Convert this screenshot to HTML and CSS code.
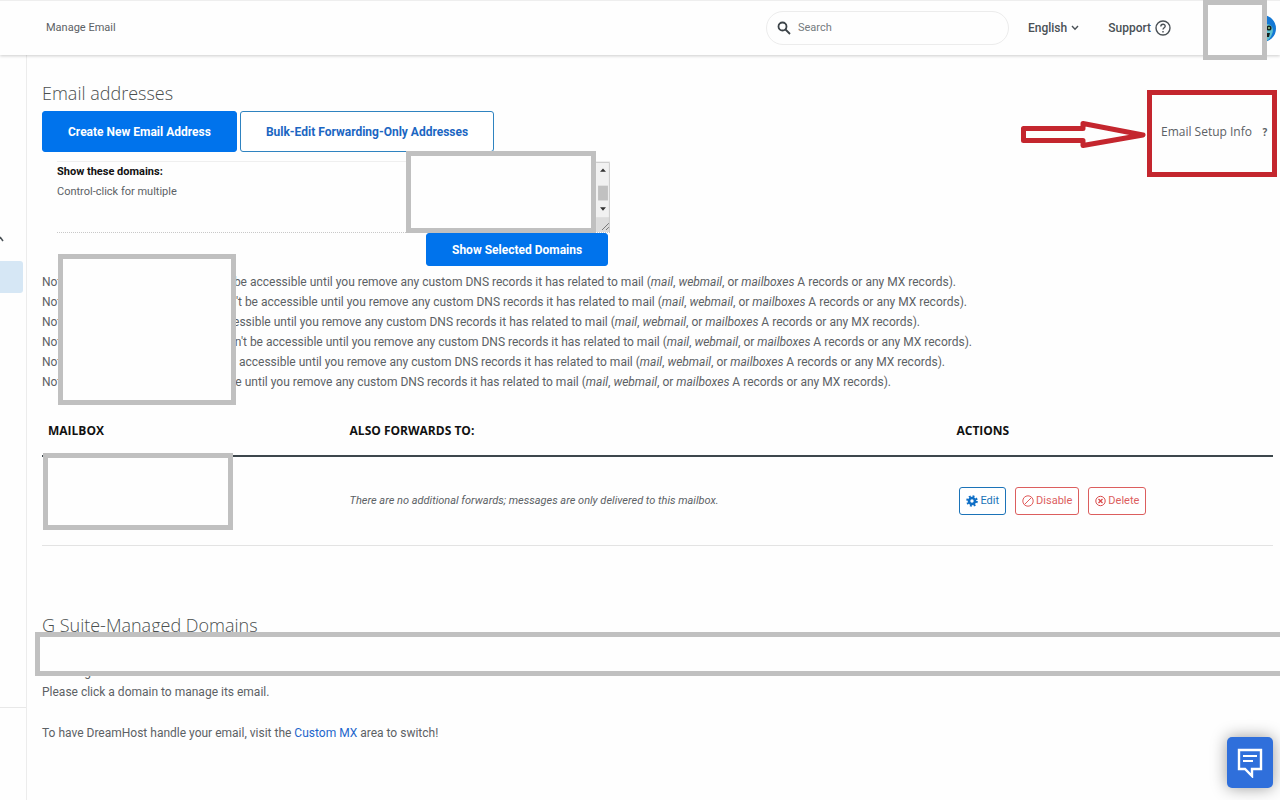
FILE: index.html
```html
<!DOCTYPE html>
<html lang="en">
<head>
    <meta charset="UTF-8">
    <meta name="viewport" content="width=device-width, initial-scale=1.0">
    <title>Manage Email</title>
    <link rel="stylesheet" href="styles.css">
</head>
<body>
    <header class="topbar">
        <span class="page-name">Manage Email</span>
        <label class="search">
            <svg width="14" height="14" viewBox="0 0 14 14" fill="none" stroke="#3c4348" stroke-width="1.800"><circle cx="5.500" cy="5.500" r="4"/><path d="M8.500 8.500L13 13"/></svg>
            <input type="search" placeholder="Search" aria-label="Search">
        </label>
        <a class="top-link lang" href="#">English
            <svg width="8" height="6" viewBox="0 0 8 6" fill="none" stroke="#4a5156" stroke-width="1.400"><path d="M1 1l3 3.200L7 1"/></svg>
        </a>
        <a class="top-link support" href="#">Support
            <svg width="16" height="16" viewBox="0 0 16 16" fill="none" stroke="#4a5156" stroke-width="1.400"><circle cx="8" cy="8" r="7"/><path d="M5.800 6.400c0-3 4.500-2.800 4.400-.2C10.200 7.800 8 7.800 8 9.600M8 10.900v1.500"/></svg>
        </a>
        <div class="account">
            <svg class="avatar" width="27" height="27" viewBox="0 0 27 27"><circle cx="13.500" cy="13.500" r="13.500" fill="#1478d4"/><path d="M7 25c-3-8 2-16 10-16 7 0 8 6 6 10-1 4-5 8-9 8z" fill="#5cc0cf"/><circle cx="20" cy="13" r="2.600" fill="#15201c"/><circle cx="20" cy="13" r="1" fill="#9bd08a"/><path d="M17 18h4l-1 4h-2z" fill="#15201c"/></svg>
            <div class="cover cover-account"></div>
        </div>
    </header>

    <div class="layout">
        <nav class="sidebar">
            <svg class="caret" width="4" height="8" viewBox="0 0 4 8" fill="none" stroke="#4a5156" stroke-width="1.500"><path d="M0 2l3 4"/></svg>
            <a class="active" href="#" aria-label="Manage Email"></a>
            <div class="side-line"></div>
        </nav>

        <main>
            <h1>Email addresses</h1>
            <div class="toolbar">
                <button class="btn primary">Create New Email Address</button>
                <button class="btn outline">Bulk-Edit Forwarding-Only Addresses</button>
                <div class="setup-info">
                    <a href="#">Email Setup Info</a>
                    <span class="help">?</span>
                    <div class="red-box"></div>
                    <svg class="arrow" width="126" height="30" viewBox="0 0 126 30" fill="none" stroke="#c4262e" stroke-width="5" stroke-linejoin="round"><path d="M2.500 8.500H62V3.500L122 15 62 25.500V20.500H2.500z"/></svg>
                </div>
            </div>

            <form class="filter">
                <div class="filter-row">
                    <div class="filter-text">
                        <label for="domains">Show these domains:</label>
                        <p>Control-click for multiple</p>
                    </div>
                    <select id="domains" multiple></select>
                    <svg class="scroll" width="14" height="71" viewBox="0 0 14 71"><path fill="#f1f1f1" d="M0 0h14v71H0z"/><path fill="#c1c1c1" d="M2 24h10v15H2z"/><path fill="#333" d="M4 10h6L7 6.500zM4 46h6L7 49.500z"/><path fill="#dcdcdc" d="M0 56h14v15H0z"/><path stroke="#777" d="M6 69l7-7M10 69l3-3"/><path fill="none" stroke="#ccc" d="M0 .5h13.500V71"/></svg>
                    <div class="cover cover-domains"></div>
                </div>
                <button type="button" class="btn primary show">Show Selected Domains</button>
            </form>

            <div class="notes">
                <p><span class="domain d1">Note</span>won't be accessible until you remove any custom DNS records it has related to mail (<i>mail</i>, <i>webmail</i>, or <i>mailboxes</i> A records or any MX records).</p>
                <p><span class="domain d2">Note</span>won't be accessible until you remove any custom DNS records it has related to mail (<i>mail</i>, <i>webmail</i>, or <i>mailboxes</i> A records or any MX records).</p>
                <p><span class="domain d3">Note</span>won't be accessible until you remove any custom DNS records it has related to mail (<i>mail</i>, <i>webmail</i>, or <i>mailboxes</i> A records or any MX records).</p>
                <p><span class="domain d4">Note</span>won't be accessible until you remove any custom DNS records it has related to mail (<i>mail</i>, <i>webmail</i>, or <i>mailboxes</i> A records or any MX records).</p>
                <p><span class="domain d5">Note</span>won't be accessible until you remove any custom DNS records it has related to mail (<i>mail</i>, <i>webmail</i>, or <i>mailboxes</i> A records or any MX records).</p>
                <p><span class="domain d6">Note</span>won't be accessible until you remove any custom DNS records it has related to mail (<i>mail</i>, <i>webmail</i>, or <i>mailboxes</i> A records or any MX records).</p>
                <div class="cover cover-notes"></div>
            </div>

            <div class="mailboxes">
                <table>
                    <thead>
                        <tr><th class="col-box">MAILBOX</th><th class="col-fwd">ALSO FORWARDS TO:</th><th>ACTIONS</th></tr>
                    </thead>
                    <tbody>
                        <tr>
                            <td></td>
                            <td><i>There are no additional forwards; messages are only delivered to this mailbox.</i></td>
                            <td>
                                <div class="actions">
                                    <button class="small edit"><svg width="12" height="12" viewBox="0 0 12 12" fill="none" stroke="#0f6fc6"><circle cx="6" cy="6" r="3" stroke-width="2.600"/><circle cx="6" cy="6" r="4.800" stroke-width="2" stroke-dasharray="1.900 1.870"/></svg>Edit</button>
                                    <button class="small danger"><svg width="12" height="12" viewBox="0 0 12 12" fill="none" stroke="#e05a5a"><circle cx="6" cy="6" r="5.200"/><path d="M2.400 9.600l7.200-7.200"/></svg>Disable</button>
                                    <button class="small danger"><svg width="11" height="12" viewBox="0 0 11 12" fill="none" stroke="#d94848"><circle cx="5.500" cy="6" r="4.700"/><path stroke-width="1.300" d="M3.500 4l4 4M7.500 4l-4 4"/></svg>Delete</button>
                                </div>
                            </td>
                        </tr>
                    </tbody>
                </table>
                <div class="cover cover-mailbox"></div>
            </div>

            <section class="gsuite">
                <h2>G Suite-Managed Domains</h2>
                <p class="using">are using G Suite.</p>
                <p>Please click a domain to manage its email.</p>
                <p class="custom">To have DreamHost handle your email, visit the <a href="#">Custom MX</a> area to switch!</p>
                <div class="cover cover-gsuite"></div>
            </section>
        </main>
    </div>

    <button class="chat" aria-label="Chat">
        <svg width="26" height="30" viewBox="0 0 26 30" fill="none" stroke="#fff" stroke-width="2.400"><path d="M2 2h22v19h-9v7l-7-7H2z"/><path d="M6 8h14M6 13h10" stroke-width="2"/></svg>
    </button>
</body>
</html>
```
FILE: styles.css
```css
*{
    box-sizing: border-box;
}
body{
    margin: 0;
    min-height: 100vh;
    display: flex;
    flex-direction: column;
    background: #fefefe;
    color: #5c6165;
    font: 12px/20px Roboto, sans-serif;
    overflow-x: hidden;
}
h1, h2, p{
    margin: 0;
}
h1, h2{
    font: 300 18px/24px "Open Sans", sans-serif;
    color: #4a4f4f;
}
a{
    color: inherit;
    text-decoration: none;
}
button{
    font-family: inherit;
    cursor: pointer;
}

/* grey boxes that hide private data */
.cover{
    position: absolute;
    background: #fefefe;
    border: 5px solid #c0c0c0;
}

.topbar{
    display: flex;
    align-items: center;
    height: 55px;
    padding: 0 4px 0 46px;
    border-top: 1px solid #eee;
    box-shadow: 0 1px 3px rgba(0,0,0,.2);
    z-index: 1;
}
.page-name{
    margin-right: auto;
    font-size: 11px;
}
.search{
    display: flex;
    align-items: center;
    gap: 7px;
    width: 243px;
    height: 34px;
    padding: 0 10px;
    border: 1px solid #ececec;
    border-radius: 17px;
}
.search input{
    flex: 1;
    min-width: 0;
    padding: 0;
    border: 0;
    outline: none;
    background: none;
    font: 11px/20px Roboto, sans-serif;
}
.search input::placeholder{
    color: #757b7f;
}
.top-link{
    display: flex;
    align-items: center;
    gap: 4px;
    font-weight: 500;
    color: #4a5156;
}
.lang{
    margin-left: 19px;
}
.support{
    margin-left: 29px;
}
.account{
    position: relative;
    display: flex;
    justify-content: flex-end;
    align-items: center;
    width: 73px;
    height: 54px;
    margin-left: 32px;
}
.cover-account{
    top: -1px;
    left: 0;
    width: 64px;
    height: 60px;
}

.layout{
    flex: 1;
    display: flex;
}
.sidebar{
    width: 27px;
    border-right: 1px solid #ececec;
    display: flex;
    flex-direction: column;
}
.caret{
    margin: 180px 0 18px;
}
.active{
    width: 23px;
    height: 32px;
    border-radius: 0 3px 3px 0;
    background: #d6e7f5;
}
.side-line{
    margin-top: auto;
    height: 93px;
    border-top: 1px solid #e8e8e8;
}
main{
    flex: 1;
    min-width: 0;
    padding: 26px 7px 20px 15px;
}

.toolbar{
    display: flex;
    gap: 3px;
    margin-top: 6px;
}
.btn{
    height: 41px;
    padding: 0 25px;
    border: 1px solid #0073ec;
    border-radius: 3px;
    font-size: 12px;
    font-weight: bold;
}
.primary{
    background: #0073ec;
    color: #fff;
}
.outline{
    background: #fff;
    border-color: #2f83c0;
    color: #1b66c2;
}
.setup-info{
    position: relative;
    display: flex;
    align-items: center;
    gap: 8px;
    margin-left: auto;
    padding-right: 3px;
    font: 12px/20px "Open Sans", sans-serif;
}
.help{
    width: 10px;
    text-align: center;
    font-size: 10px;
    font-weight: bold;
}
.red-box{
    position: absolute;
    top: -21px;
    right: -4px;
    width: 130px;
    height: 87px;
    border: 5px solid #c4262e;
}
.arrow{
    position: absolute;
    top: 9px;
    right: 126px;
}

.filter{
    width: 553px;
    margin: 9px 0 0 15px;
}
.filter-row{
    position: relative;
    display: flex;
    border-top: 1px solid #efefef;
    border-bottom: 1px dotted #c8c8c8;
}
.filter-text{
    flex: 1;
    font-size: 11px;
}
.filter-text label{
    display: block;
    font-weight: bold;
    color: #111;
}
.filter select{
    width: 186px;
    height: 70px;
    border: 0;
    background: #fff;
}
.scroll{
    height: 70px;
}
.cover-domains{
    top: -11px;
    left: 349px;
    width: 190px;
    height: 82px;
}
.show{
    display: block;
    height: 33px;
    margin-left: 369px;
}

.notes{
    position: relative;
    margin-top: 6px;
}
.domain{
    display: inline-block;
}
.d1{ width: 161px; }
.d2{ width: 172px; }
.d3{ width: 125px; }
.d4{ width: 177px; }
.d5{ width: 150px; }
.d6{ width: 96px; }
.cover-notes{
    top: -18px;
    left: 16px;
    width: 178px;
    height: 151px;
}

.mailboxes{
    position: relative;
    margin-top: 14px;
}
table{
    width: 100%;
    table-layout: fixed;
    border-collapse: collapse;
}
th, td{
    padding: 0 6px;
    text-align: left;
}
th{
    height: 50px;
    border-bottom: 2px solid #3d474c;
    font: bold 12px/20px "Open Sans", sans-serif;
    color: #111;
}
td{
    height: 89px;
    border-bottom: 1px solid #e3e3e3;
    font-size: 11px;
}
.col-box{
    width: 24.5%;
}
.col-fwd{
    width: 49.3%;
}
.actions{
    display: flex;
    gap: 9px;
    padding-left: 3px;
}
.small{
    display: flex;
    align-items: center;
    gap: 2px;
    height: 28px;
    padding: 0 6px;
    border: 1px solid;
    border-radius: 3px;
    background: #fff;
    font-size: 11px;
}
.edit{
    color: #1b73b8;
}
.danger{
    color: #dc5e5e;
}
.cover-mailbox{
    top: 47px;
    left: 1px;
    width: 190px;
    height: 77px;
}

.gsuite{
    position: relative;
    margin-top: 67px;
}
.using{
    margin-top: 25px;
}
.custom{
    margin-top: 21px;
}
.custom a{
    color: #1d66cc;
}
.cover-gsuite{
    top: 19px;
    left: -7px;
    right: -12px;
    height: 44px;
}

.chat{
    position: fixed;
    right: 7px;
    bottom: 12px;
    display: flex;
    align-items: center;
    justify-content: center;
    width: 46px;
    height: 51px;
    border: 0;
    border-radius: 5px;
    background: #2f6fdb;
    box-shadow: 0 0 16px rgba(0,0,0,.4);
}
```
